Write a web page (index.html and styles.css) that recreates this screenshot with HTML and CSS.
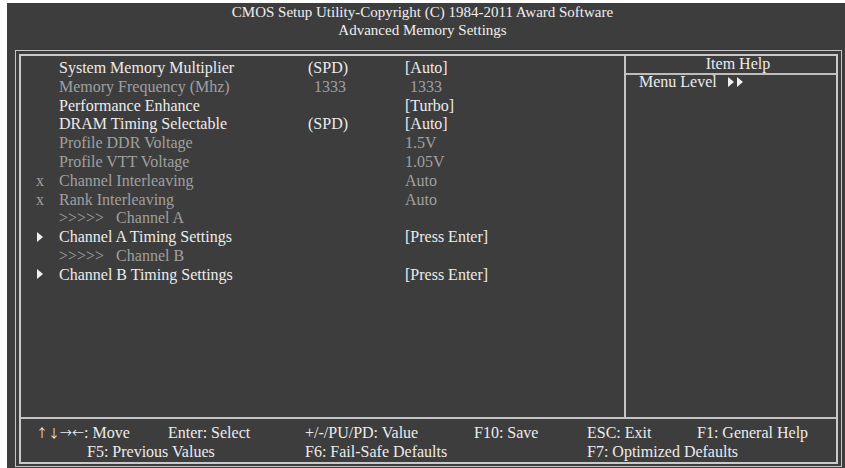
FILE: index.html
```html
<!DOCTYPE html>
<html>
<head>
<meta charset="utf-8">
<link rel="stylesheet" href="styles.css">
</head>
<body>
<div class="screen">
  <header class="title">
    <div>CMOS Setup Utility-Copyright (C) 1984-2011 Award Software</div>
    <div>Advanced Memory Settings</div>
  </header>
  <div class="frame">
    <div class="box">
      <div class="main">
        <div class="settings">
          <div class="row"><span class="mark"></span><span>System Memory Multiplier</span><span>(SPD)</span><span>[Auto]</span></div>
          <div class="row dim"><span class="mark"></span><span>Memory Frequency (Mhz)</span><span class="num">1333</span><span class="num2">1333</span></div>
          <div class="row"><span class="mark"></span><span>Performance Enhance</span><span></span><span>[Turbo]</span></div>
          <div class="row"><span class="mark"></span><span>DRAM Timing Selectable</span><span>(SPD)</span><span>[Auto]</span></div>
          <div class="row dim"><span class="mark"></span><span>Profile DDR Voltage</span><span></span><span>1.5V</span></div>
          <div class="row dim"><span class="mark"></span><span>Profile VTT Voltage</span><span></span><span>1.05V</span></div>
          <div class="row dim"><span class="mark">x</span><span>Channel Interleaving</span><span></span><span>Auto</span></div>
          <div class="row dim"><span class="mark">x</span><span>Rank Interleaving</span><span></span><span>Auto</span></div>
          <div class="row dim"><span class="mark"></span><span class="sub">&gt;&gt;&gt;&gt;&gt;   Channel A</span><span></span><span></span></div>
          <div class="row"><span class="mark"><svg class="tri" width="6" height="10" viewBox="0 0 6 10"><polygon points="0,0 6,5 0,10" fill="#f0f0f0"/></svg></span><span>Channel A Timing Settings</span><span></span><span>[Press Enter]</span></div>
          <div class="row dim"><span class="mark"></span><span class="sub">&gt;&gt;&gt;&gt;&gt;   Channel B</span><span></span><span></span></div>
          <div class="row"><span class="mark"><svg class="tri" width="6" height="10" viewBox="0 0 6 10"><polygon points="0,0 6,5 0,10" fill="#f0f0f0"/></svg></span><span>Channel B Timing Settings</span><span></span><span>[Press Enter]</span></div>
        </div>
        <div class="help">
          <div class="help-title">Item Help</div>
          <div class="help-body"><span>Menu Level</span><svg class="tri2" width="16" height="10" viewBox="0 0 16 10"><polygon points="0,0 6,5 0,10" fill="#f0f0f0"/><polygon points="9,0 15,5 9,10" fill="#f0f0f0"/></svg></div>
        </div>
      </div>
      <div class="footer">
        <span><span class="arrows">↑↓→←</span>: Move</span><span>Enter: Select</span><span>+/-/PU/PD: Value</span><span>F10: Save</span><span>ESC: Exit</span><span>F1: General Help</span>
        <span class="f5">F5: Previous Values</span><span class="f6">F6: Fail-Safe Defaults</span><span class="f7">F7: Optimized Defaults</span>
      </div>
    </div>
  </div>
</div>
</body>
</html>
```
FILE: styles.css
```css
html, body {
  margin: 0;
  padding: 0;
  background: #ffffff;
}
body {
  font-family: "Liberation Serif", "Times New Roman", serif;
  color: #ececec;
}
.screen {
  margin: 3px 0 0 7px;
  width: 838px;
  height: 465px;
  background: #3d3d3d;
  overflow: hidden;
}
.title {
  height: 47px;
  box-sizing: border-box;
  padding: 0 7px 0 0;
  text-align: center;
  font-size: 15px;
  line-height: 18px;
  color: #efefef;
}
.frame {
  margin-left: 8px;
  width: 827px;
  height: 417px;
  box-sizing: border-box;
  border: 1px solid #c6c6c6;
  padding: 3px;
}
.box {
  height: 410px;
  box-sizing: border-box;
  border: 2px solid #cacaca;
  display: flex;
  flex-direction: column;
}
.main {
  height: 361px;
  display: flex;
}
.settings {
  width: 603px;
  font-size: 16px;
  line-height: 18.8px;
  padding: 3px 0 0 15px;
  box-sizing: border-box;
}
.row {
  display: grid;
  grid-template-columns: 23px 249px 97px 1fr;
  height: 18.8px;
  white-space: pre;
}
.row.dim {
  color: #a0a0a0;
}
.mark {
  display: flex;
  align-items: center;
}
.tri {
  margin-left: 1px;
  margin-top: -2px;
}
.num { padding-left: 6px; }
.num2 { padding-left: 5px; }
.help {
  width: 212px;
  border-left: 2px solid #c4c4c4;
  box-sizing: border-box;
  font-size: 16px;
}
.help-title {
  height: 17px;
  line-height: 16px;
  text-align: center;
  border-bottom: 2px solid #bdbdbd;
  padding-left: 14px;
}
.help-body {
  display: flex;
  align-items: center;
  line-height: 14px;
  padding-left: 13px;
}
.tri2 {
  margin-left: 11px;
  margin-top: -1px;
}
.footer {
  flex: 1;
  border-top: 2px solid #c4c4c4;
  display: grid;
  grid-template-columns: 132px 137px 169px 113px 110px 1fr;
  grid-template-rows: 18.6px 18.6px;
  padding: 5px 0 0 15px;
  font-size: 16px;
  line-height: 18.6px;
  white-space: nowrap;
}
.arrows {
  font-family: "Noto Sans CJK SC", sans-serif;
  font-size: 12px;
}
.f5 {
  grid-column: 1 / 3;
  padding-left: 51px;
}
.f6 {
  grid-column: 3 / 5;
}
.f7 {
  grid-column: 5 / 7;
}
```
